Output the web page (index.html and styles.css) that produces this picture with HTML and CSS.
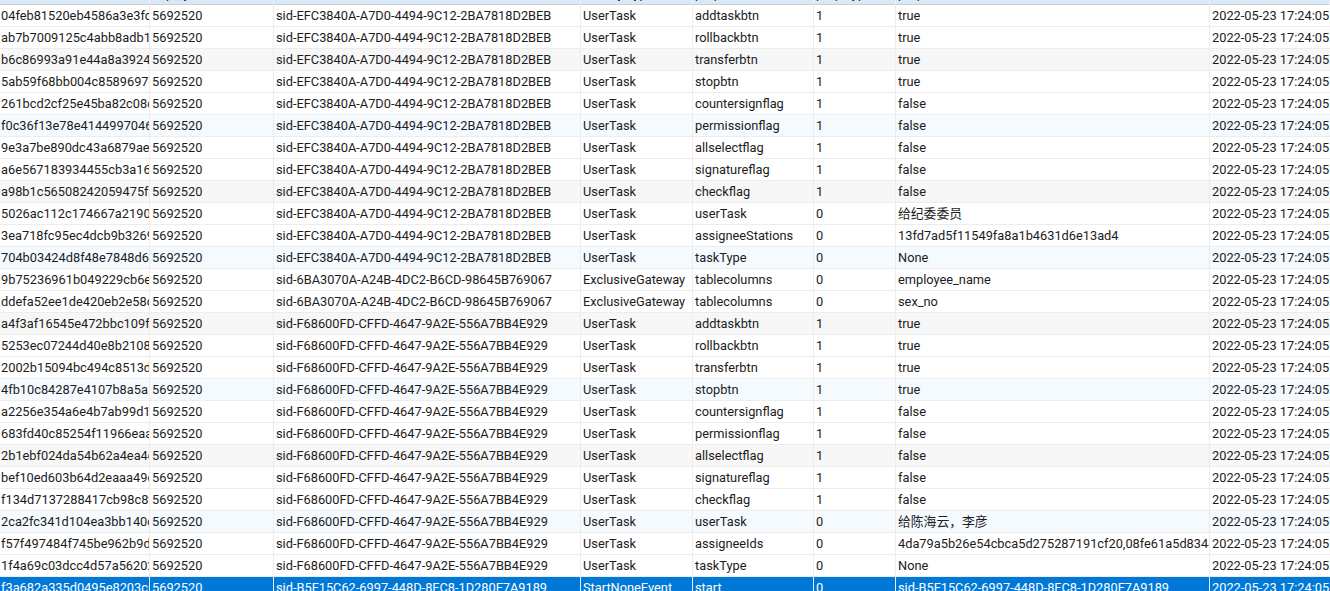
FILE: index.html
```html
<!DOCTYPE html>
<html lang="zh">
<head>
<meta charset="utf-8">
<title>Data grid</title>
<link rel="stylesheet" href="styles.css">
</head>
<body>
<table class="grid">
<colgroup><col class="c1"><col class="c2"><col class="c3"><col class="c4"><col class="c5"><col class="c6"><col class="c7"><col class="c8"></colgroup>
<thead><tr><th>id</th><th>deployment_id</th><th>resource_id</th><th>activity_type</th><th>prop_name</th><th>prop_type</th><th>prop_value</th><th>create_time</th></tr></thead>
<tbody>
<tr><td>04feb81520eb4586a3e3fc91</td><td>5692520</td><td>sid-EFC3840A-A7D0-4494-9C12-2BA7818D2BEB</td><td>UserTask</td><td>addtaskbtn</td><td>1</td><td>true</td><td>2022-05-23 17:24:05</td></tr>
<tr><td>ab7b7009125c4abb8adb1f2c</td><td>5692520</td><td>sid-EFC3840A-A7D0-4494-9C12-2BA7818D2BEB</td><td>UserTask</td><td>rollbackbtn</td><td>1</td><td>true</td><td>2022-05-23 17:24:05</td></tr>
<tr class="gray"><td>b6c86993a91e44a8a39240e1</td><td>5692520</td><td>sid-EFC3840A-A7D0-4494-9C12-2BA7818D2BEB</td><td>UserTask</td><td>transferbtn</td><td>1</td><td>true</td><td>2022-05-23 17:24:05</td></tr>
<tr><td>5ab59f68bb004c8589697c2d</td><td>5692520</td><td>sid-EFC3840A-A7D0-4494-9C12-2BA7818D2BEB</td><td>UserTask</td><td>stopbtn</td><td>1</td><td>true</td><td>2022-05-23 17:24:05</td></tr>
<tr><td>261bcd2cf25e45ba82c08c4a</td><td>5692520</td><td>sid-EFC3840A-A7D0-4494-9C12-2BA7818D2BEB</td><td>UserTask</td><td>countersignflag</td><td>1</td><td>false</td><td>2022-05-23 17:24:05</td></tr>
<tr class="blue"><td>f0c36f13e78e41449970461b</td><td>5692520</td><td>sid-EFC3840A-A7D0-4494-9C12-2BA7818D2BEB</td><td>UserTask</td><td>permissionflag</td><td>1</td><td>false</td><td>2022-05-23 17:24:05</td></tr>
<tr><td>9e3a7be890dc43a6879ae5d1</td><td>5692520</td><td>sid-EFC3840A-A7D0-4494-9C12-2BA7818D2BEB</td><td>UserTask</td><td>allselectflag</td><td>1</td><td>false</td><td>2022-05-23 17:24:05</td></tr>
<tr><td>a6e567183934455cb3a164f0</td><td>5692520</td><td>sid-EFC3840A-A7D0-4494-9C12-2BA7818D2BEB</td><td>UserTask</td><td>signatureflag</td><td>1</td><td>false</td><td>2022-05-23 17:24:05</td></tr>
<tr class="gray"><td>a98b1c56508242059475fe3a</td><td>5692520</td><td>sid-EFC3840A-A7D0-4494-9C12-2BA7818D2BEB</td><td>UserTask</td><td>checkflag</td><td>1</td><td>false</td><td>2022-05-23 17:24:05</td></tr>
<tr><td>5026ac112c174667a21909d7</td><td>5692520</td><td>sid-EFC3840A-A7D0-4494-9C12-2BA7818D2BEB</td><td>UserTask</td><td>userTask</td><td>0</td><td>给纪委委员</td><td>2022-05-23 17:24:05</td></tr>
<tr><td>3ea718fc95ec4dcb9b32695e</td><td>5692520</td><td>sid-EFC3840A-A7D0-4494-9C12-2BA7818D2BEB</td><td>UserTask</td><td>assigneeStations</td><td>0</td><td>13fd7ad5f11549fa8a1b4631d6e13ad4</td><td>2022-05-23 17:24:05</td></tr>
<tr class="blue"><td>704b03424d8f48e7848d6a1c</td><td>5692520</td><td>sid-EFC3840A-A7D0-4494-9C12-2BA7818D2BEB</td><td>UserTask</td><td>taskType</td><td>0</td><td>None</td><td>2022-05-23 17:24:05</td></tr>
<tr><td>9b75236961b049229cb6e0f2</td><td>5692520</td><td>sid-6BA3070A-A24B-4DC2-B6CD-98645B769067</td><td>ExclusiveGateway</td><td>tablecolumns</td><td>0</td><td>employee_name</td><td>2022-05-23 17:24:05</td></tr>
<tr><td>ddefa52ee1de420eb2e58c17</td><td>5692520</td><td>sid-6BA3070A-A24B-4DC2-B6CD-98645B769067</td><td>ExclusiveGateway</td><td>tablecolumns</td><td>0</td><td>sex_no</td><td>2022-05-23 17:24:05</td></tr>
<tr class="gray"><td>a4f3af16545e472bbc109fa6</td><td>5692520</td><td>sid-F68600FD-CFFD-4647-9A2E-556A7BB4E929</td><td>UserTask</td><td>addtaskbtn</td><td>1</td><td>true</td><td>2022-05-23 17:24:05</td></tr>
<tr><td>5253ec07244d40e8b2108d3c</td><td>5692520</td><td>sid-F68600FD-CFFD-4647-9A2E-556A7BB4E929</td><td>UserTask</td><td>rollbackbtn</td><td>1</td><td>true</td><td>2022-05-23 17:24:05</td></tr>
<tr><td>2002b15094bc494c8513d7e0</td><td>5692520</td><td>sid-F68600FD-CFFD-4647-9A2E-556A7BB4E929</td><td>UserTask</td><td>transferbtn</td><td>1</td><td>true</td><td>2022-05-23 17:24:05</td></tr>
<tr class="blue"><td>4fb10c84287e4107b8a5a1f9</td><td>5692520</td><td>sid-F68600FD-CFFD-4647-9A2E-556A7BB4E929</td><td>UserTask</td><td>stopbtn</td><td>1</td><td>true</td><td>2022-05-23 17:24:05</td></tr>
<tr><td>a2256e354a6e4b7ab99d1c08</td><td>5692520</td><td>sid-F68600FD-CFFD-4647-9A2E-556A7BB4E929</td><td>UserTask</td><td>countersignflag</td><td>1</td><td>false</td><td>2022-05-23 17:24:05</td></tr>
<tr><td>683fd40c85254f11966eaa27</td><td>5692520</td><td>sid-F68600FD-CFFD-4647-9A2E-556A7BB4E929</td><td>UserTask</td><td>permissionflag</td><td>1</td><td>false</td><td>2022-05-23 17:24:05</td></tr>
<tr class="gray"><td>2b1ebf024da54b62a4ea4d90</td><td>5692520</td><td>sid-F68600FD-CFFD-4647-9A2E-556A7BB4E929</td><td>UserTask</td><td>allselectflag</td><td>1</td><td>false</td><td>2022-05-23 17:24:05</td></tr>
<tr><td>bef10ed603b64d2eaaa49c15</td><td>5692520</td><td>sid-F68600FD-CFFD-4647-9A2E-556A7BB4E929</td><td>UserTask</td><td>signatureflag</td><td>1</td><td>false</td><td>2022-05-23 17:24:05</td></tr>
<tr><td>f134d7137288417cb98c8f6e</td><td>5692520</td><td>sid-F68600FD-CFFD-4647-9A2E-556A7BB4E929</td><td>UserTask</td><td>checkflag</td><td>1</td><td>false</td><td>2022-05-23 17:24:05</td></tr>
<tr class="blue"><td>2ca2fc341d104ea3bb140c7b</td><td>5692520</td><td>sid-F68600FD-CFFD-4647-9A2E-556A7BB4E929</td><td>UserTask</td><td>userTask</td><td>0</td><td>给陈海云，李彦</td><td>2022-05-23 17:24:05</td></tr>
<tr><td>f57f497484f745be962b9d31</td><td>5692520</td><td>sid-F68600FD-CFFD-4647-9A2E-556A7BB4E929</td><td>UserTask</td><td>assigneeIds</td><td>0</td><td>4da79a5b26e54cbca5d275287191cf20,08fe61a5d8344c1e</td><td>2022-05-23 17:24:05</td></tr>
<tr><td>1f4a69c03dcc4d57a562028e</td><td>5692520</td><td>sid-F68600FD-CFFD-4647-9A2E-556A7BB4E929</td><td>UserTask</td><td>taskType</td><td>0</td><td>None</td><td>2022-05-23 17:24:05</td></tr>
<tr class="selected"><td>f3a682a335d0495e8203c6d4</td><td>5692520</td><td>sid-B5F15C62-6997-448D-8FC8-1D280F7A9189</td><td>StartNoneEvent</td><td>start</td><td>0</td><td>sid-B5F15C62-6997-448D-8FC8-1D280F7A9189</td><td>2022-05-23 17:24:05</td></tr>
</tbody>
</table>
</body>
</html>
```
FILE: styles.css
```css
html, body {
  margin: 0;
  height: 100%;
  overflow: hidden;
  background: #fff;
}
.grid {
  width: 1330px;
  margin-top: -17px;
  table-layout: fixed;
  border-collapse: separate;
  border-spacing: 0;
  font-family: Roboto, "Noto Sans CJK SC", sans-serif;
  font-size: 12.8px;
  color: #1c1c1c;
}
.c1 { width: 150px; }
.c2 { width: 124px; }
.c3 { width: 307px; }
.c4 { width: 112px; }
.c5 { width: 121px; }
.c6 { width: 82px; }
.c7 { width: 314px; }
.c8 { width: 120px; }
.grid th, .grid td {
  height: 21px;
  padding: 0 0 0 2px;
  box-sizing: content-box;
  overflow: hidden;
  white-space: nowrap;
  text-align: left;
  border-right: 1px solid #ededed;
  border-bottom: 1px solid #ededed;
  line-height: 21px;
}
.grid th {
  background: #d8e8f7;
  font-weight: 400;
  border-right-color: #eef4fa;
  border-bottom-color: #d0d0d0;
}
.grid th:first-child, .grid td:first-child { padding-left: 1px; }
.grid td:last-child { border-right: 0; overflow: visible; }
.gray td { background: #f7f7f7; }
.blue td { background: #f5faff; }
.selected td {
  background: #0078d7;
  color: #fff;
  border-right-color: #e6f1fb;
}
```
